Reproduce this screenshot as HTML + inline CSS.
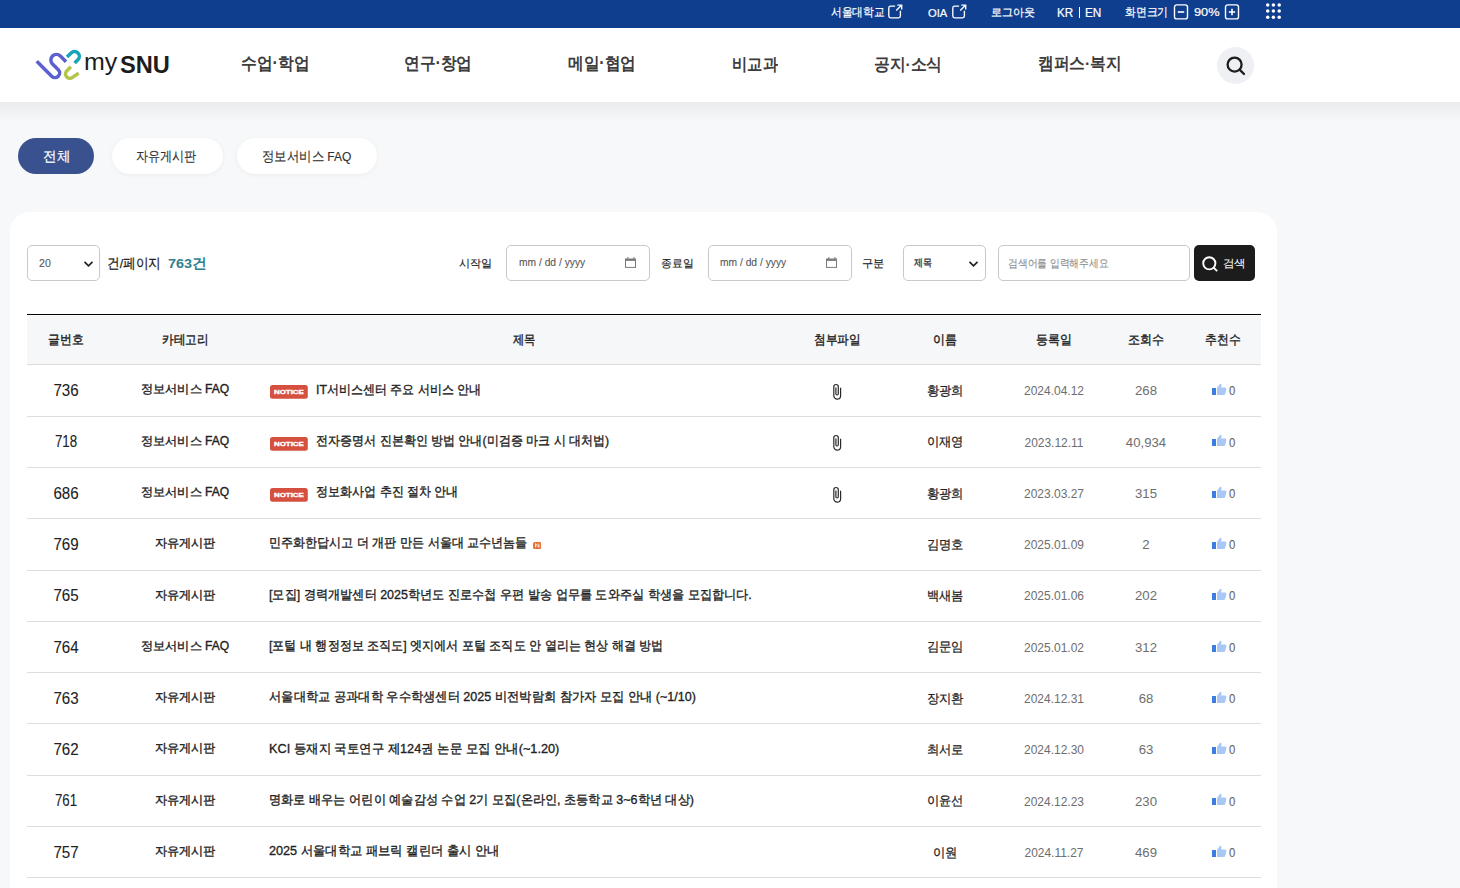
<!DOCTYPE html>
<html lang="ko">
<head>
<meta charset="utf-8">
<style>
*{box-sizing:border-box;margin:0;padding:0}
html,body{width:1460px;height:888px;overflow:hidden}
body{font-family:"Liberation Sans",sans-serif;background:#f7f8fa;color:#222;position:relative}
.abs{position:absolute}
.t{position:absolute;white-space:nowrap;line-height:1;transform-origin:0 0}
.t.c{text-align:center;transform-origin:50% 0}
#topbar{position:absolute;left:0;top:0;width:1460px;height:28px;background:#0f3e8f}
#header{position:absolute;left:0;top:28px;width:1460px;height:74px;background:#fff}
#shadow{position:absolute;left:0;top:102px;width:1460px;height:20px;background:linear-gradient(#ebebeb,#eef0f3 40%,#f7f8fa)}
.pill{position:absolute;top:138px;height:36px;border-radius:18px;background:#fff;box-shadow:0 1px 5px rgba(0,0,0,.05)}
#card{position:absolute;left:10px;top:212px;width:1267px;height:720px;background:#fff;border-radius:20px}
.box{position:absolute;top:245px;height:36px;border:1px solid #c9c9c9;border-radius:5px;background:#fff}
.notice{width:38px;height:13px;background:#d9503f;border-radius:3px;color:#fff;font-size:7px;font-weight:bold;line-height:13px;text-align:center;letter-spacing:0.3px;font-family:"Liberation Sans",sans-serif}
.newic{width:9px;height:9px;background:#e8743b;border-radius:2px;color:#fff;font-size:6px;font-weight:bold;line-height:9px;text-align:center}
</style>
</head>
<body>
<div id="topbar"></div>
<div id="header"></div>
<div id="shadow"></div>

<!-- topbar icons -->
<svg class="abs" style="left:886px;top:4px" width="18" height="16" viewBox="0 0 18 16">
  <path d="M9.1 2.1 H4.6 Q2.8 2.1 2.8 3.9 V12.1 Q2.8 13.9 4.6 13.9 H12.6 Q14.4 13.9 14.4 12.1 V6.8" fill="none" stroke="#fff" stroke-width="1.35"/>
  <path d="M10.2 6.6 L15.2 1.6 M11.3 1.1 H15.7 V5.5" fill="none" stroke="#fff" stroke-width="1.35"/>
</svg>
<svg class="abs" style="left:950px;top:4px" width="18" height="16" viewBox="0 0 18 16">
  <path d="M9.1 2.1 H4.6 Q2.8 2.1 2.8 3.9 V12.1 Q2.8 13.9 4.6 13.9 H12.6 Q14.4 13.9 14.4 12.1 V6.8" fill="none" stroke="#fff" stroke-width="1.35"/>
  <path d="M10.2 6.6 L15.2 1.6 M11.3 1.1 H15.7 V5.5" fill="none" stroke="#fff" stroke-width="1.35"/>
</svg>
<div class="abs" style="left:1078.7px;top:6.6px;width:1.2px;height:11px;background:#fff"></div>
<svg class="abs" style="left:1173px;top:4px" width="16" height="16" viewBox="0 0 16 16">
  <rect x="1.5" y="0.9" width="13" height="14" rx="2.2" fill="none" stroke="#fff" stroke-width="1.4"/>
  <path d="M4.8 8 H11.2" stroke="#fff" stroke-width="1.6"/>
</svg>
<svg class="abs" style="left:1224px;top:4px" width="16" height="16" viewBox="0 0 16 16">
  <rect x="1.5" y="0.9" width="13" height="14" rx="2.2" fill="none" stroke="#fff" stroke-width="1.4"/>
  <path d="M4.8 8 H11.2 M8 4.8 V11.2" stroke="#fff" stroke-width="1.6"/>
</svg>
<svg class="abs" style="left:1265px;top:3px" width="18" height="18" viewBox="0 0 18 18">
  <g fill="#fff">
  <circle cx="2.7" cy="1.9" r="1.75"/><circle cx="8.4" cy="1.9" r="1.75"/><circle cx="14.2" cy="1.9" r="1.75"/>
  <circle cx="2.7" cy="8.1" r="1.75"/><circle cx="8.4" cy="8.1" r="1.75"/><circle cx="14.2" cy="8.1" r="1.75"/>
  <circle cx="2.7" cy="14.3" r="1.75"/><circle cx="8.4" cy="14.3" r="1.75"/><circle cx="14.2" cy="14.3" r="1.75"/>
  </g>
</svg>

<!-- logo -->
<svg class="abs" style="left:30px;top:45px" width="55" height="40" viewBox="0 0 55 40">
  <path d="M6.75 16.25 L21.7 31.2 A4.63 4.63 0 0 0 28.25 24.65 L22.5 18.9 A5.55 5.55 0 0 1 30.35 11.05 L36 16.7" fill="none" stroke="#5b5fcf" stroke-width="3.5"/>
  <path d="M37 12 L41.1 7.9 A4.8 4.8 0 0 1 47.9 14.7 L44.6 18" fill="none" stroke="#19a5b9" stroke-width="3.5"/>
  <path d="M40.8 21.8 L36.5 26.2 A4.3 4.3 0 0 0 42.5 32.3 L48.6 28.2" fill="none" stroke="#b4c549" stroke-width="3.5"/>
</svg>

<!-- header search -->
<div class="abs" style="left:1217px;top:46.5px;width:37px;height:37px;border-radius:50%;background:#eef0f3"></div>
<svg class="abs" style="left:1225px;top:55px" width="21" height="21" viewBox="0 0 21 21">
  <circle cx="9.6" cy="9.6" r="7" fill="none" stroke="#1d1d1d" stroke-width="2.3"/>
  <path d="M14.6 14.6 L19 19" stroke="#1d1d1d" stroke-width="2.3" stroke-linecap="round"/>
</svg>

<!-- tabs -->
<div class="pill" style="left:18px;width:76px;background:#3a5190;box-shadow:none"></div>
<div class="pill" style="left:111.5px;width:111px"></div>
<div class="pill" style="left:237px;width:140px"></div>

<div id="card"></div>

<!-- filter boxes -->
<div class="box" style="left:27px;width:73px"></div>
<svg class="abs" style="left:83px;top:260px" width="11" height="8" viewBox="0 0 11 8"><path d="M1.5 1.8 L5.5 5.8 L9.5 1.8" fill="none" stroke="#222" stroke-width="1.7"/></svg>
<div class="box" style="left:506px;width:144px"></div>
<svg class="abs" style="left:624px;top:256px" width="13" height="13" viewBox="0 0 13 13"><rect x="1.5" y="3.2" width="10" height="8.2" fill="none" stroke="#7a7a7a" stroke-width="1"/><rect x="1" y="2.7" width="11" height="2.2" fill="#7a7a7a"/><path d="M3.8 1 V3 M9.9 1 V3" stroke="#7a7a7a" stroke-width="1"/></svg>
<div class="box" style="left:708px;width:144px"></div>
<svg class="abs" style="left:825px;top:256px" width="13" height="13" viewBox="0 0 13 13"><rect x="1.5" y="3.2" width="10" height="8.2" fill="none" stroke="#7a7a7a" stroke-width="1"/><rect x="1" y="2.7" width="11" height="2.2" fill="#7a7a7a"/><path d="M3.8 1 V3 M9.9 1 V3" stroke="#7a7a7a" stroke-width="1"/></svg>
<div class="box" style="left:903px;width:83px"></div>
<svg class="abs" style="left:968px;top:260px" width="11" height="8" viewBox="0 0 11 8"><path d="M1.5 1.8 L5.5 5.8 L9.5 1.8" fill="none" stroke="#222" stroke-width="1.7"/></svg>
<div class="box" style="left:998px;width:192px"></div>
<div class="abs" style="left:1194px;top:245px;width:61px;height:36px;background:#1c1c1c;border-radius:5px"></div>
<svg class="abs" style="left:1201px;top:255px" width="18" height="18" viewBox="0 0 18 18"><circle cx="8.3" cy="8.3" r="6.1" fill="none" stroke="#fff" stroke-width="1.9"/><path d="M12.6 12.6 L16.2 16.2" stroke="#fff" stroke-width="1.9"/></svg>

<!-- table header -->
<div class="abs" style="left:27px;top:316px;width:1234px;height:48px;background:#f6f7f9"></div>
<div class="abs" style="left:27px;top:314px;width:1234px;height:1px;background:#000"></div>
<div class="abs" style="left:27px;top:364px;width:1234px;height:1px;background:#dcdcdc"></div>

<div class="t" style="left:830.81px;top:6.4px;font-size:11.67px;font-weight:500;color:#fff;transform:scaleX(0.8931);-webkit-text-stroke:0.2px #fff;">서울대학교</div>
<div class="t" style="left:927.9px;top:6.6px;font-size:11.71px;font-weight:500;color:#fff;transform:scaleX(0.955);-webkit-text-stroke:0.2px #fff;">OIA</div>
<div class="t" style="left:990.5px;top:6.7px;font-size:10.89px;font-weight:500;color:#fff;transform:scaleX(1.0048);-webkit-text-stroke:0.2px #fff;">로그아웃</div>
<div class="t" style="left:1057.43px;top:7.4px;font-size:12.0px;font-weight:500;color:#fff;transform:scaleX(0.9733);-webkit-text-stroke:0.2px #fff;">KR</div>
<div class="t" style="left:1084.82px;top:7.4px;font-size:12.0px;font-weight:500;color:#fff;transform:scaleX(0.98);-webkit-text-stroke:0.2px #fff;">EN</div>
<div class="t" style="left:1125.2px;top:6px;font-size:12.22px;font-weight:500;color:#fff;transform:scaleX(0.9);-webkit-text-stroke:0.2px #fff;">화면크기</div>
<div class="t" style="left:1193.6px;top:6.2px;font-size:11.71px;font-weight:500;color:#fff;transform:scaleX(1.0913);-webkit-text-stroke:0.2px #fff;">90%</div>
<div class="t" style="left:83.89px;top:49.9px;font-size:24.8px;font-weight:400;color:#1d1d1d;transform:scaleX(1.0065);-webkit-text-stroke:0px #1d1d1d;">my</div>
<div class="t" style="left:120.34px;top:53.1px;font-size:24.71px;font-weight:700;color:#1d1d1d;transform:scaleX(0.956);-webkit-text-stroke:0px #1d1d1d;">SNU</div>
<div class="t" style="left:240.77px;top:54.8px;font-size:17.47px;font-weight:700;color:#3d3d3d;transform:scaleX(0.9254);-webkit-text-stroke:0px #3d3d3d;">수업·학업</div>
<div class="t" style="left:404.48px;top:54.8px;font-size:17.47px;font-weight:700;color:#3d3d3d;transform:scaleX(0.9239);-webkit-text-stroke:0px #3d3d3d;">연구·창업</div>
<div class="t" style="left:568.08px;top:54.8px;font-size:17.47px;font-weight:700;color:#3d3d3d;transform:scaleX(0.9211);-webkit-text-stroke:0px #3d3d3d;">메일·협업</div>
<div class="t" style="left:731.7px;top:55.5px;font-size:17.44px;font-weight:700;color:#3d3d3d;transform:scaleX(0.898);-webkit-text-stroke:0px #3d3d3d;">비교과</div>
<div class="t" style="left:874.47px;top:56.5px;font-size:16.53px;font-weight:700;color:#3d3d3d;transform:scaleX(0.9286);-webkit-text-stroke:0px #3d3d3d;">공지·소식</div>
<div class="t" style="left:1037.58px;top:55.199999999999996px;font-size:17.16px;font-weight:700;color:#3d3d3d;transform:scaleX(0.9227);-webkit-text-stroke:0px #3d3d3d;">캠퍼스·복지</div>
<div class="t" style="left:42.83px;top:148.6px;font-size:14.33px;font-weight:500;color:#fff;transform:scaleX(0.968);-webkit-text-stroke:0.2px #fff;">전체</div>
<div class="t" style="left:136.13px;top:148.6px;font-size:14.33px;font-weight:500;color:#333;transform:scaleX(0.8652);-webkit-text-stroke:0.15px #333;">자유게시판</div>
<div class="t" style="left:262.11px;top:149.6px;font-size:13.58px;font-weight:500;color:#333;transform:scaleX(0.8859);-webkit-text-stroke:0.15px #333;">정보서비스 FAQ</div>
<div class="t" style="left:38.5px;top:258.2px;font-size:11.14px;font-weight:400;color:#555;transform:scaleX(0.95);-webkit-text-stroke:0.1px #555;">20</div>
<div class="t" style="left:107.49px;top:256.7px;font-size:13.67px;font-weight:500;color:#222;transform:scaleX(0.9054);-webkit-text-stroke:0.25px #222;">건/페이지</div>
<div class="t" style="left:168.24px;top:256.7px;font-size:13.67px;font-weight:700;color:#2f7f8e;transform:scaleX(1.0571);-webkit-text-stroke:0px #2f7f8e;">763건</div>
<div class="t" style="left:458.79px;top:257.7px;font-size:11.22px;font-weight:500;color:#222;transform:scaleX(1.0065);-webkit-text-stroke:0.15px #222;">시작일</div>
<div class="t" style="left:518.82px;top:257.3px;font-size:10.53px;font-weight:400;color:#555;transform:scaleX(0.9761);-webkit-text-stroke:0.1px #555;">mm / dd / yyyy</div>
<div class="t" style="left:660.81px;top:257.7px;font-size:11.22px;font-weight:500;color:#222;transform:scaleX(0.9871);-webkit-text-stroke:0.15px #222;">종료일</div>
<div class="t" style="left:720.22px;top:257.3px;font-size:10.53px;font-weight:400;color:#555;transform:scaleX(0.9761);-webkit-text-stroke:0.1px #555;">mm / dd / yyyy</div>
<div class="t" style="left:862.27px;top:257.7px;font-size:11.22px;font-weight:500;color:#222;transform:scaleX(1.025);-webkit-text-stroke:0.15px #222;">구분</div>
<div class="t" style="left:913.7px;top:257.5px;font-size:10.32px;font-weight:700;color:#444;transform:scaleX(0.9);-webkit-text-stroke:0px #444;">제목</div>
<div class="t" style="left:1008.01px;top:257.7px;font-size:11.22px;font-weight:400;color:#8c8c8c;transform:scaleX(0.8883);-webkit-text-stroke:0.1px #8c8c8c;">검색어를 입력해주세요</div>
<div class="t" style="left:1222.65px;top:257.7px;font-size:11.22px;font-weight:500;color:#fff;transform:scaleX(1.045);-webkit-text-stroke:0.05px #fff;">검색</div>
<div class="t" style="left:47.89px;top:334.3px;font-size:12.56px;font-weight:500;color:#222;transform:scaleX(0.9081);-webkit-text-stroke:0.4px #222;">글번호</div>
<div class="t" style="left:161.71px;top:334.3px;font-size:12.56px;font-weight:500;color:#222;transform:scaleX(0.8918);-webkit-text-stroke:0.4px #222;">카테고리</div>
<div class="t" style="left:513.0px;top:334.3px;font-size:12.56px;font-weight:500;color:#222;transform:scaleX(0.8654);-webkit-text-stroke:0.4px #222;">제목</div>
<div class="t" style="left:814.2px;top:334.3px;font-size:12.56px;font-weight:500;color:#222;transform:scaleX(0.896);-webkit-text-stroke:0.4px #222;">첨부파일</div>
<div class="t" style="left:932.98px;top:334.3px;font-size:12.56px;font-weight:500;color:#222;transform:scaleX(0.92);-webkit-text-stroke:0.4px #222;">이름</div>
<div class="t" style="left:1036.08px;top:334.3px;font-size:12.56px;font-weight:500;color:#222;transform:scaleX(0.9189);-webkit-text-stroke:0.4px #222;">등록일</div>
<div class="t" style="left:1128.28px;top:334.3px;font-size:12.56px;font-weight:500;color:#222;transform:scaleX(0.9216);-webkit-text-stroke:0.4px #222;">조회수</div>
<div class="t" style="left:1204.89px;top:334.3px;font-size:12.56px;font-weight:500;color:#222;transform:scaleX(0.9108);-webkit-text-stroke:0.4px #222;">추천수</div>
<div class="t c" style="left:-84.40px;width:300px;top:383.00px;font-size:15.57px;font-weight:500;color:#222;transform:scaleX(0.9708);-webkit-text-stroke:0.1px #222">736</div>
<div class="t c" style="left:34.70px;width:300px;top:384.30px;font-size:11.89px;font-weight:400;color:#222;transform:scaleX(1.0163);-webkit-text-stroke:0.35px #222">정보서비스 FAQ</div>
<svg class="abs" style="left:270px;top:385.2px" width="38" height="14" viewBox="0 0 38 14"><rect x="0" y="0" width="37.8" height="13.7" rx="2.5" fill="#d6503f"/><text x="4" y="9.3" font-family="Liberation Sans" font-weight="bold" font-size="5.8" fill="#fff" stroke="#fff" stroke-width="0.35" textLength="29.8" lengthAdjust="spacingAndGlyphs">NOTICE</text></svg>
<div class="t" style="left:315.78px;top:382.50px;font-size:13.33px;font-weight:400;color:#222;transform:scaleX(0.9243);-webkit-text-stroke:0.35px #222">IT서비스센터 주요 서비스 안내</div>
<svg class="abs" style="left:830px;top:381.0px" width="14" height="20" viewBox="0 0 14 20"><path d="M10.6 6.7 V14.7 A3.4 3.4 0 0 1 3.8 14.7 V5.75 A2.25 2.25 0 0 1 8.3 5.75 V12.8 A1.2 1.2 0 0 1 5.9 12.8 V6.4" fill="none" stroke="#2a2a2a" stroke-width="1.2"/></svg>
<div class="t c" style="left:795.30px;width:300px;top:384.90px;font-size:12.89px;font-weight:500;color:#222;transform:scaleX(0.9472);-webkit-text-stroke:0.25px #222">황광희</div>
<div class="t c" style="left:904.00px;width:300px;top:385.20px;font-size:12.57px;font-weight:400;color:#6e6e6e;transform:scaleX(0.9532);-webkit-text-stroke:0px #6e6e6e">2024.04.12</div>
<div class="t c" style="left:996.30px;width:300px;top:385.20px;font-size:12.57px;font-weight:400;color:#6e6e6e;transform:scaleX(1.05);-webkit-text-stroke:0px #6e6e6e">268</div>
<svg class="abs" style="left:1211.5px;top:383.0px" width="15" height="12" viewBox="0 0 15 12"><rect x="0" y="5" width="4" height="7" fill="#3b7de0"/><path d="M5 5 L7.5 1.5 C8 0.3 9.6 0.5 9.5 2 L9.2 4.5 L13 4.5 C14.3 4.6 14.6 5.6 14.3 6.6 L13.2 11 C13 11.7 12.5 12 11.8 12 L5 12 Z" fill="#a9c8f5"/></svg>
<div class="t" style="left:1228.60px;top:385.20px;font-size:12.57px;font-weight:400;color:#666;transform:scaleX(0.9);-webkit-text-stroke:0.1px #666">0</div>
<div class="abs" style="left:27px;top:416px;width:1234px;height:1px;background:#dedede"></div>
<div class="t c" style="left:-84.40px;width:300px;top:434.30px;font-size:15.57px;font-weight:500;color:#222;transform:scaleX(0.8543);-webkit-text-stroke:0.1px #222">718</div>
<div class="t c" style="left:34.70px;width:300px;top:435.60px;font-size:11.89px;font-weight:400;color:#222;transform:scaleX(1.0163);-webkit-text-stroke:0.35px #222">정보서비스 FAQ</div>
<svg class="abs" style="left:270px;top:436.5px" width="38" height="14" viewBox="0 0 38 14"><rect x="0" y="0" width="37.8" height="13.7" rx="2.5" fill="#d6503f"/><text x="4" y="9.3" font-family="Liberation Sans" font-weight="bold" font-size="5.8" fill="#fff" stroke="#fff" stroke-width="0.35" textLength="29.8" lengthAdjust="spacingAndGlyphs">NOTICE</text></svg>
<div class="t" style="left:315.78px;top:433.80px;font-size:13.33px;font-weight:400;color:#222;transform:scaleX(0.9243);-webkit-text-stroke:0.35px #222">전자증명서 진본확인 방법 안내(미검증 마크 시 대처법)</div>
<svg class="abs" style="left:830px;top:432.3px" width="14" height="20" viewBox="0 0 14 20"><path d="M10.6 6.7 V14.7 A3.4 3.4 0 0 1 3.8 14.7 V5.75 A2.25 2.25 0 0 1 8.3 5.75 V12.8 A1.2 1.2 0 0 1 5.9 12.8 V6.4" fill="none" stroke="#2a2a2a" stroke-width="1.2"/></svg>
<div class="t c" style="left:795.30px;width:300px;top:436.20px;font-size:12.89px;font-weight:500;color:#222;transform:scaleX(0.9472);-webkit-text-stroke:0.25px #222">이재영</div>
<div class="t c" style="left:904.00px;width:300px;top:436.50px;font-size:12.57px;font-weight:400;color:#6e6e6e;transform:scaleX(0.9532);-webkit-text-stroke:0px #6e6e6e">2023.12.11</div>
<div class="t c" style="left:996.30px;width:300px;top:436.50px;font-size:12.57px;font-weight:400;color:#6e6e6e;transform:scaleX(1.05);-webkit-text-stroke:0px #6e6e6e">40,934</div>
<svg class="abs" style="left:1211.5px;top:434.3px" width="15" height="12" viewBox="0 0 15 12"><rect x="0" y="5" width="4" height="7" fill="#3b7de0"/><path d="M5 5 L7.5 1.5 C8 0.3 9.6 0.5 9.5 2 L9.2 4.5 L13 4.5 C14.3 4.6 14.6 5.6 14.3 6.6 L13.2 11 C13 11.7 12.5 12 11.8 12 L5 12 Z" fill="#a9c8f5"/></svg>
<div class="t" style="left:1228.60px;top:436.50px;font-size:12.57px;font-weight:400;color:#666;transform:scaleX(0.9);-webkit-text-stroke:0.1px #666">0</div>
<div class="abs" style="left:27px;top:467px;width:1234px;height:1px;background:#dedede"></div>
<div class="t c" style="left:-84.40px;width:300px;top:485.60px;font-size:15.57px;font-weight:500;color:#222;transform:scaleX(0.9708);-webkit-text-stroke:0.1px #222">686</div>
<div class="t c" style="left:34.70px;width:300px;top:486.90px;font-size:11.89px;font-weight:400;color:#222;transform:scaleX(1.0163);-webkit-text-stroke:0.35px #222">정보서비스 FAQ</div>
<svg class="abs" style="left:270px;top:487.8px" width="38" height="14" viewBox="0 0 38 14"><rect x="0" y="0" width="37.8" height="13.7" rx="2.5" fill="#d6503f"/><text x="4" y="9.3" font-family="Liberation Sans" font-weight="bold" font-size="5.8" fill="#fff" stroke="#fff" stroke-width="0.35" textLength="29.8" lengthAdjust="spacingAndGlyphs">NOTICE</text></svg>
<div class="t" style="left:315.78px;top:485.10px;font-size:13.33px;font-weight:400;color:#222;transform:scaleX(0.9243);-webkit-text-stroke:0.35px #222">정보화사업 추진 절차 안내</div>
<svg class="abs" style="left:830px;top:483.6px" width="14" height="20" viewBox="0 0 14 20"><path d="M10.6 6.7 V14.7 A3.4 3.4 0 0 1 3.8 14.7 V5.75 A2.25 2.25 0 0 1 8.3 5.75 V12.8 A1.2 1.2 0 0 1 5.9 12.8 V6.4" fill="none" stroke="#2a2a2a" stroke-width="1.2"/></svg>
<div class="t c" style="left:795.30px;width:300px;top:487.50px;font-size:12.89px;font-weight:500;color:#222;transform:scaleX(0.9472);-webkit-text-stroke:0.25px #222">황광희</div>
<div class="t c" style="left:904.00px;width:300px;top:487.80px;font-size:12.57px;font-weight:400;color:#6e6e6e;transform:scaleX(0.9532);-webkit-text-stroke:0px #6e6e6e">2023.03.27</div>
<div class="t c" style="left:996.30px;width:300px;top:487.80px;font-size:12.57px;font-weight:400;color:#6e6e6e;transform:scaleX(1.05);-webkit-text-stroke:0px #6e6e6e">315</div>
<svg class="abs" style="left:1211.5px;top:485.6px" width="15" height="12" viewBox="0 0 15 12"><rect x="0" y="5" width="4" height="7" fill="#3b7de0"/><path d="M5 5 L7.5 1.5 C8 0.3 9.6 0.5 9.5 2 L9.2 4.5 L13 4.5 C14.3 4.6 14.6 5.6 14.3 6.6 L13.2 11 C13 11.7 12.5 12 11.8 12 L5 12 Z" fill="#a9c8f5"/></svg>
<div class="t" style="left:1228.60px;top:487.80px;font-size:12.57px;font-weight:400;color:#666;transform:scaleX(0.9);-webkit-text-stroke:0.1px #666">0</div>
<div class="abs" style="left:27px;top:518px;width:1234px;height:1px;background:#dedede"></div>
<div class="t c" style="left:-84.40px;width:300px;top:536.90px;font-size:15.57px;font-weight:500;color:#222;transform:scaleX(0.9708);-webkit-text-stroke:0.1px #222">769</div>
<div class="t c" style="left:34.70px;width:300px;top:538.20px;font-size:11.89px;font-weight:400;color:#222;transform:scaleX(1.0163);-webkit-text-stroke:0.35px #222">자유게시판</div>
<div class="t" style="left:269.08px;top:536.40px;font-size:13.33px;font-weight:400;color:#222;transform:scaleX(0.928);-webkit-text-stroke:0.35px #222">민주화한답시고 더 개판 만든 서울대 교수년놈들</div>
<svg class="abs" style="left:532.5px;top:542px" width="8.5" height="7" viewBox="0 0 8.5 7"><rect width="8.5" height="7" rx="1.5" fill="#e8743b"/><path d="M2.6 5.3 V1.7 L5.9 5.3 V1.7" fill="none" stroke="#fff" stroke-width="0.9"/></svg>
<div class="t c" style="left:795.30px;width:300px;top:538.80px;font-size:12.89px;font-weight:500;color:#222;transform:scaleX(0.9472);-webkit-text-stroke:0.25px #222">김명호</div>
<div class="t c" style="left:904.00px;width:300px;top:539.10px;font-size:12.57px;font-weight:400;color:#6e6e6e;transform:scaleX(0.9532);-webkit-text-stroke:0px #6e6e6e">2025.01.09</div>
<div class="t c" style="left:996.30px;width:300px;top:539.10px;font-size:12.57px;font-weight:400;color:#6e6e6e;transform:scaleX(1.05);-webkit-text-stroke:0px #6e6e6e">2</div>
<svg class="abs" style="left:1211.5px;top:536.9px" width="15" height="12" viewBox="0 0 15 12"><rect x="0" y="5" width="4" height="7" fill="#3b7de0"/><path d="M5 5 L7.5 1.5 C8 0.3 9.6 0.5 9.5 2 L9.2 4.5 L13 4.5 C14.3 4.6 14.6 5.6 14.3 6.6 L13.2 11 C13 11.7 12.5 12 11.8 12 L5 12 Z" fill="#a9c8f5"/></svg>
<div class="t" style="left:1228.60px;top:539.10px;font-size:12.57px;font-weight:400;color:#666;transform:scaleX(0.9);-webkit-text-stroke:0.1px #666">0</div>
<div class="abs" style="left:27px;top:570px;width:1234px;height:1px;background:#dedede"></div>
<div class="t c" style="left:-84.40px;width:300px;top:588.20px;font-size:15.57px;font-weight:500;color:#222;transform:scaleX(0.9708);-webkit-text-stroke:0.1px #222">765</div>
<div class="t c" style="left:34.70px;width:300px;top:589.50px;font-size:11.89px;font-weight:400;color:#222;transform:scaleX(1.0163);-webkit-text-stroke:0.35px #222">자유게시판</div>
<div class="t" style="left:269.08px;top:587.70px;font-size:13.33px;font-weight:400;color:#222;transform:scaleX(0.9355);-webkit-text-stroke:0.35px #222">[모집] 경력개발센터 2025학년도 진로수첩 우편 발송 업무를 도와주실 학생을 모집합니다.</div>
<div class="t c" style="left:795.30px;width:300px;top:590.10px;font-size:12.89px;font-weight:500;color:#222;transform:scaleX(0.9472);-webkit-text-stroke:0.25px #222">백새봄</div>
<div class="t c" style="left:904.00px;width:300px;top:590.40px;font-size:12.57px;font-weight:400;color:#6e6e6e;transform:scaleX(0.9532);-webkit-text-stroke:0px #6e6e6e">2025.01.06</div>
<div class="t c" style="left:996.30px;width:300px;top:590.40px;font-size:12.57px;font-weight:400;color:#6e6e6e;transform:scaleX(1.05);-webkit-text-stroke:0px #6e6e6e">202</div>
<svg class="abs" style="left:1211.5px;top:588.2px" width="15" height="12" viewBox="0 0 15 12"><rect x="0" y="5" width="4" height="7" fill="#3b7de0"/><path d="M5 5 L7.5 1.5 C8 0.3 9.6 0.5 9.5 2 L9.2 4.5 L13 4.5 C14.3 4.6 14.6 5.6 14.3 6.6 L13.2 11 C13 11.7 12.5 12 11.8 12 L5 12 Z" fill="#a9c8f5"/></svg>
<div class="t" style="left:1228.60px;top:590.40px;font-size:12.57px;font-weight:400;color:#666;transform:scaleX(0.9);-webkit-text-stroke:0.1px #666">0</div>
<div class="abs" style="left:27px;top:621px;width:1234px;height:1px;background:#dedede"></div>
<div class="t c" style="left:-84.40px;width:300px;top:639.50px;font-size:15.57px;font-weight:500;color:#222;transform:scaleX(0.9708);-webkit-text-stroke:0.1px #222">764</div>
<div class="t c" style="left:34.70px;width:300px;top:640.80px;font-size:11.89px;font-weight:400;color:#222;transform:scaleX(1.0163);-webkit-text-stroke:0.35px #222">정보서비스 FAQ</div>
<div class="t" style="left:269.08px;top:639.00px;font-size:13.33px;font-weight:400;color:#222;transform:scaleX(0.9276);-webkit-text-stroke:0.35px #222">[포털 내 행정정보 조직도] 엣지에서 포털 조직도 안 열리는 현상 해결 방법</div>
<div class="t c" style="left:795.30px;width:300px;top:641.40px;font-size:12.89px;font-weight:500;color:#222;transform:scaleX(0.9472);-webkit-text-stroke:0.25px #222">김문임</div>
<div class="t c" style="left:904.00px;width:300px;top:641.70px;font-size:12.57px;font-weight:400;color:#6e6e6e;transform:scaleX(0.9532);-webkit-text-stroke:0px #6e6e6e">2025.01.02</div>
<div class="t c" style="left:996.30px;width:300px;top:641.70px;font-size:12.57px;font-weight:400;color:#6e6e6e;transform:scaleX(1.05);-webkit-text-stroke:0px #6e6e6e">312</div>
<svg class="abs" style="left:1211.5px;top:639.5px" width="15" height="12" viewBox="0 0 15 12"><rect x="0" y="5" width="4" height="7" fill="#3b7de0"/><path d="M5 5 L7.5 1.5 C8 0.3 9.6 0.5 9.5 2 L9.2 4.5 L13 4.5 C14.3 4.6 14.6 5.6 14.3 6.6 L13.2 11 C13 11.7 12.5 12 11.8 12 L5 12 Z" fill="#a9c8f5"/></svg>
<div class="t" style="left:1228.60px;top:641.70px;font-size:12.57px;font-weight:400;color:#666;transform:scaleX(0.9);-webkit-text-stroke:0.1px #666">0</div>
<div class="abs" style="left:27px;top:672px;width:1234px;height:1px;background:#dedede"></div>
<div class="t c" style="left:-84.40px;width:300px;top:690.80px;font-size:15.57px;font-weight:500;color:#222;transform:scaleX(0.9708);-webkit-text-stroke:0.1px #222">763</div>
<div class="t c" style="left:34.70px;width:300px;top:692.10px;font-size:11.89px;font-weight:400;color:#222;transform:scaleX(1.0163);-webkit-text-stroke:0.35px #222">자유게시판</div>
<div class="t" style="left:269.08px;top:690.30px;font-size:13.33px;font-weight:400;color:#222;transform:scaleX(0.9428);-webkit-text-stroke:0.35px #222">서울대학교 공과대학 우수학생센터 2025 비전박람회 참가자 모집 안내 (~1/10)</div>
<div class="t c" style="left:795.30px;width:300px;top:692.70px;font-size:12.89px;font-weight:500;color:#222;transform:scaleX(0.9472);-webkit-text-stroke:0.25px #222">장지환</div>
<div class="t c" style="left:904.00px;width:300px;top:693.00px;font-size:12.57px;font-weight:400;color:#6e6e6e;transform:scaleX(0.9532);-webkit-text-stroke:0px #6e6e6e">2024.12.31</div>
<div class="t c" style="left:996.30px;width:300px;top:693.00px;font-size:12.57px;font-weight:400;color:#6e6e6e;transform:scaleX(1.05);-webkit-text-stroke:0px #6e6e6e">68</div>
<svg class="abs" style="left:1211.5px;top:690.8px" width="15" height="12" viewBox="0 0 15 12"><rect x="0" y="5" width="4" height="7" fill="#3b7de0"/><path d="M5 5 L7.5 1.5 C8 0.3 9.6 0.5 9.5 2 L9.2 4.5 L13 4.5 C14.3 4.6 14.6 5.6 14.3 6.6 L13.2 11 C13 11.7 12.5 12 11.8 12 L5 12 Z" fill="#a9c8f5"/></svg>
<div class="t" style="left:1228.60px;top:693.00px;font-size:12.57px;font-weight:400;color:#666;transform:scaleX(0.9);-webkit-text-stroke:0.1px #666">0</div>
<div class="abs" style="left:27px;top:723px;width:1234px;height:1px;background:#dedede"></div>
<div class="t c" style="left:-84.40px;width:300px;top:742.10px;font-size:15.57px;font-weight:500;color:#222;transform:scaleX(0.9708);-webkit-text-stroke:0.1px #222">762</div>
<div class="t c" style="left:34.70px;width:300px;top:743.40px;font-size:11.89px;font-weight:400;color:#222;transform:scaleX(1.0163);-webkit-text-stroke:0.35px #222">자유게시판</div>
<div class="t" style="left:269.08px;top:741.60px;font-size:13.33px;font-weight:400;color:#222;transform:scaleX(0.9541);-webkit-text-stroke:0.35px #222">KCI 등재지 국토연구 제124권 논문 모집 안내(~1.20)</div>
<div class="t c" style="left:795.30px;width:300px;top:744.00px;font-size:12.89px;font-weight:500;color:#222;transform:scaleX(0.9472);-webkit-text-stroke:0.25px #222">최서로</div>
<div class="t c" style="left:904.00px;width:300px;top:744.30px;font-size:12.57px;font-weight:400;color:#6e6e6e;transform:scaleX(0.9532);-webkit-text-stroke:0px #6e6e6e">2024.12.30</div>
<div class="t c" style="left:996.30px;width:300px;top:744.30px;font-size:12.57px;font-weight:400;color:#6e6e6e;transform:scaleX(1.05);-webkit-text-stroke:0px #6e6e6e">63</div>
<svg class="abs" style="left:1211.5px;top:742.1px" width="15" height="12" viewBox="0 0 15 12"><rect x="0" y="5" width="4" height="7" fill="#3b7de0"/><path d="M5 5 L7.5 1.5 C8 0.3 9.6 0.5 9.5 2 L9.2 4.5 L13 4.5 C14.3 4.6 14.6 5.6 14.3 6.6 L13.2 11 C13 11.7 12.5 12 11.8 12 L5 12 Z" fill="#a9c8f5"/></svg>
<div class="t" style="left:1228.60px;top:744.30px;font-size:12.57px;font-weight:400;color:#666;transform:scaleX(0.9);-webkit-text-stroke:0.1px #666">0</div>
<div class="abs" style="left:27px;top:775px;width:1234px;height:1px;background:#dedede"></div>
<div class="t c" style="left:-84.40px;width:300px;top:793.40px;font-size:15.57px;font-weight:500;color:#222;transform:scaleX(0.8543);-webkit-text-stroke:0.1px #222">761</div>
<div class="t c" style="left:34.70px;width:300px;top:794.70px;font-size:11.89px;font-weight:400;color:#222;transform:scaleX(1.0163);-webkit-text-stroke:0.35px #222">자유게시판</div>
<div class="t" style="left:269.08px;top:792.90px;font-size:13.33px;font-weight:400;color:#222;transform:scaleX(0.9383);-webkit-text-stroke:0.35px #222">명화로 배우는 어린이 예술감성 수업 2기 모집(온라인, 초등학교 3~6학년 대상)</div>
<div class="t c" style="left:795.30px;width:300px;top:795.30px;font-size:12.89px;font-weight:500;color:#222;transform:scaleX(0.9472);-webkit-text-stroke:0.25px #222">이윤선</div>
<div class="t c" style="left:904.00px;width:300px;top:795.60px;font-size:12.57px;font-weight:400;color:#6e6e6e;transform:scaleX(0.9532);-webkit-text-stroke:0px #6e6e6e">2024.12.23</div>
<div class="t c" style="left:996.30px;width:300px;top:795.60px;font-size:12.57px;font-weight:400;color:#6e6e6e;transform:scaleX(1.05);-webkit-text-stroke:0px #6e6e6e">230</div>
<svg class="abs" style="left:1211.5px;top:793.4px" width="15" height="12" viewBox="0 0 15 12"><rect x="0" y="5" width="4" height="7" fill="#3b7de0"/><path d="M5 5 L7.5 1.5 C8 0.3 9.6 0.5 9.5 2 L9.2 4.5 L13 4.5 C14.3 4.6 14.6 5.6 14.3 6.6 L13.2 11 C13 11.7 12.5 12 11.8 12 L5 12 Z" fill="#a9c8f5"/></svg>
<div class="t" style="left:1228.60px;top:795.60px;font-size:12.57px;font-weight:400;color:#666;transform:scaleX(0.9);-webkit-text-stroke:0.1px #666">0</div>
<div class="abs" style="left:27px;top:826px;width:1234px;height:1px;background:#dedede"></div>
<div class="t c" style="left:-84.40px;width:300px;top:844.70px;font-size:15.57px;font-weight:500;color:#222;transform:scaleX(0.9708);-webkit-text-stroke:0.1px #222">757</div>
<div class="t c" style="left:34.70px;width:300px;top:846.00px;font-size:11.89px;font-weight:400;color:#222;transform:scaleX(1.0163);-webkit-text-stroke:0.35px #222">자유게시판</div>
<div class="t" style="left:269.08px;top:844.20px;font-size:13.33px;font-weight:400;color:#222;transform:scaleX(0.9484);-webkit-text-stroke:0.35px #222">2025 서울대학교 패브릭 캘린더 출시 안내</div>
<div class="t c" style="left:795.30px;width:300px;top:846.60px;font-size:12.89px;font-weight:500;color:#222;transform:scaleX(0.9472);-webkit-text-stroke:0.25px #222">이원</div>
<div class="t c" style="left:904.00px;width:300px;top:846.90px;font-size:12.57px;font-weight:400;color:#6e6e6e;transform:scaleX(0.9532);-webkit-text-stroke:0px #6e6e6e">2024.11.27</div>
<div class="t c" style="left:996.30px;width:300px;top:846.90px;font-size:12.57px;font-weight:400;color:#6e6e6e;transform:scaleX(1.05);-webkit-text-stroke:0px #6e6e6e">469</div>
<svg class="abs" style="left:1211.5px;top:844.7px" width="15" height="12" viewBox="0 0 15 12"><rect x="0" y="5" width="4" height="7" fill="#3b7de0"/><path d="M5 5 L7.5 1.5 C8 0.3 9.6 0.5 9.5 2 L9.2 4.5 L13 4.5 C14.3 4.6 14.6 5.6 14.3 6.6 L13.2 11 C13 11.7 12.5 12 11.8 12 L5 12 Z" fill="#a9c8f5"/></svg>
<div class="t" style="left:1228.60px;top:846.90px;font-size:12.57px;font-weight:400;color:#666;transform:scaleX(0.9);-webkit-text-stroke:0.1px #666">0</div>
<div class="abs" style="left:27px;top:877px;width:1234px;height:1px;background:#dedede"></div>
</body>
</html>
